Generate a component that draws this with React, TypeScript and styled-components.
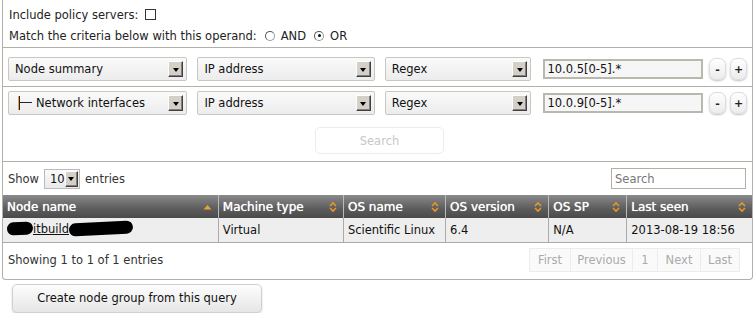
import React from 'react';
import styled, { createGlobalStyle } from 'styled-components';

const GlobalStyle = createGlobalStyle`
  * { box-sizing: border-box; }
  body {
    margin: 0;
    background: #fff;
    font-family: "DejaVu Sans", Verdana, sans-serif;
    font-size: 11.5px;
    color: #222;
  }
`;

const Panel = styled.div`
  width: 751px;
  margin-left: 2px;
  border: 1px solid #b0b0a8;
  border-top: none;
  border-bottom-right-radius: 4px;
  border-bottom-left-radius: 4px;
`;

const Options = styled.div`
  height: 48px;
  padding: 7px 6px 0;
  border-bottom: 1px solid #b0b0a8;
  display: flex;
  flex-direction: column;
  gap: 6px;
`;

const OptionLine = styled.div`
  display: flex;
  align-items: center;
  gap: 6px;
  height: 15px;
`;

const Check = styled.span`
  width: 11px;
  height: 11px;
  border: 1px solid #333;
  background: #fff;
  margin-left: 1px;
`;

const Radio = styled.span<{ checked?: boolean }>`
  width: 10px;
  height: 10px;
  border-radius: 50%;
  border: 1px solid #999;
  border-top-color: #555;
  border-left-color: #555;
  background: #fff;
  display: inline-flex;
  align-items: center;
  justify-content: center;
  margin-left: 2px;
  &::after {
    content: '';
    width: 3px;
    height: 3px;
    border-radius: 50%;
    background: ${p => (p.checked ? '#111' : 'transparent')};
  }
`;

const CriteriaRow = styled.div<{ divider?: boolean; top: number; h: number }>`
  display: flex;
  align-items: flex-start;
  height: ${p => p.h}px;
  padding: ${p => p.top}px 5px 0;
  gap: 8px;
  border-bottom: ${p => (p.divider ? '1px solid #b0b0a8' : 'none')};
`;

const Select = styled.div<{ w: number }>`
  width: ${p => p.w}px;
  height: 24px;
  border: 1px solid #c8c8c0;
  border-radius: 2px;
  background: linear-gradient(#fafafa, #ececec);
  display: flex;
  align-items: center;
  justify-content: space-between;
  padding: 0 3px 0 6px;
  color: #111;
  margin-right: 2px;
`;

const Arrow = styled.span`
  width: 15px;
  height: 16px;
  background: #d4d0c8;
  border: 1px solid;
  border-color: #fff #404040 #404040 #fff;
  box-shadow: inset -1px -1px 0 #808080;
  display: flex;
  align-items: center;
  justify-content: center;
  &::after {
    content: '';
    border-left: 3.5px solid transparent;
    border-right: 3.5px solid transparent;
    border-top: 4px solid #000;
    margin-top: 1px;
  }
`;

const Branch = styled.span`
  display: inline-flex;
  align-items: center;
  vertical-align: middle;
  margin: -2px 4px 0 4px;
  &::before {
    content: '';
    width: 1px;
    height: 14px;
    background: #223;
    box-shadow: -1px 0 0 #e8a040;
  }
  &::after {
    content: '';
    width: 12px;
    height: 1px;
    background: #223;
  }
`;

const ValueInput = styled.div`
  width: 161px;
  height: 20px;
  margin-top: 2px;
  border: 2px solid #b8b8ac;
  background: #f6f6f6;
  padding: 0 2px;
  display: flex;
  align-items: center;
  color: #111;
  margin-left: 2px;
`;

const RoundBtns = styled.div`
  display: flex;
  gap: 4px;
  margin-left: -2px;
  margin-top: 1px;
`;

const RoundBtn = styled.span`
  width: 17px;
  height: 22px;
  border: 1px solid #ddd;
  border-radius: 7px;
  background: linear-gradient(#fff, #ececec);
  box-shadow: 0 1px 2px rgba(0, 0, 0, 0.25);
  display: flex;
  align-items: center;
  justify-content: center;
  font-size: 11px;
  font-weight: bold;
  color: #222;
`;

const SearchArea = styled.div`
  height: 45px;
  display: flex;
  justify-content: center;
  padding-top: 10px;
  border-bottom: 1px solid #b0b0a8;
`;

const GhostButton = styled.span`
  width: 129px;
  height: 27px;
  border: 1px solid #ececec;
  border-radius: 5px;
  display: flex;
  align-items: center;
  justify-content: center;
  color: #c8c8c8;
  margin-left: 4px;
`;

const TableTools = styled.div`
  display: flex;
  align-items: center;
  justify-content: space-between;
  height: 33px;
  padding: 0 6px 0 5px;
`;

const Length = styled.div`
  display: flex;
  align-items: center;
  gap: 5px;
  color: #333;
`;

const SmallSelect = styled.span`
  width: 36px;
  height: 20px;
  border: 1px solid #bbb;
  background: linear-gradient(#fafafa, #eaeaea);
  display: flex;
  align-items: center;
  justify-content: space-between;
  padding: 0 1px 0 5px;
  color: #111;
`;

const FilterBox = styled.div`
  width: 135px;
  height: 21px;
  border: 1px solid #b0b0a8;
  padding: 0 3px;
  display: flex;
  align-items: center;
  color: #777;
`;

const Table = styled.table`
  width: 100%;
  border-collapse: collapse;
  font-size: 11.5px;
`;

const Th = styled.th<{ w: number }>`
  width: ${p => p.w}px;
  height: 23px;
  padding: 0 6px 0 4px;
  text-align: left;
  color: #fff;
  font-weight: normal;
  font-size: 12px;
  text-shadow: 0 0 0.7px #fff;
  background: linear-gradient(#8a8a8a, #5c5c5c 60%, #4a4a4a);
  border-left: 1px solid #bbb;
  &:first-child {
    border-left: none;
  }
`;

const ThInner = styled.div`
  display: flex;
  align-items: center;
  justify-content: space-between;
`;

const Td = styled.td`
  height: 24px;
  padding: 0 4px;
  background: #eeeeee;
  border-left: 1px solid #aaa;
  border-bottom: 1px solid #aaa;
  color: #111;
  &:first-child {
    border-left: none;
  }
`;

const NodeLink = styled.span`
  display: inline-flex;
  align-items: center;
  text-decoration: underline;
  color: #111;
`;

const Blot = styled.span<{ w: number }>`
  display: inline-block;
  width: ${p => p.w}px;
  height: 13px;
  background: #000;
  border-radius: 7px;
  transform: rotate(-3deg);
`;

const Footer = styled.div`
  display: flex;
  align-items: center;
  justify-content: space-between;
  height: 36px;
  padding: 0 12px 2px 5px;
  color: #333;
`;

const Pager = styled.div`
  display: flex;
`;

const PageBtn = styled.span<{ w: number }>`
  width: ${p => p.w}px;
  height: 24px;
  border: 1px solid #ececec;
  margin-left: -1px;
  background: #fafafa;
  display: flex;
  align-items: center;
  justify-content: center;
  color: #aaa;
`;

const CreateButton = styled.div`
  margin: 4px 0 0 12px;
  width: 250px;
  height: 29px;
  border: 1px solid #d0d0d0;
  border-radius: 5px;
  background: linear-gradient(#fdfdfd, #e6e6e6);
  box-shadow: 0 1px 2px rgba(0, 0, 0, 0.2);
  display: flex;
  align-items: center;
  justify-content: center;
  color: #111;
`;

const SortUp = () => (
  <svg width="9" height="6" viewBox="0 0 9 6">
    <path d="M0.5 5.5 L4.5 1 L8.5 5.5 Z" fill="#f0a030" />
  </svg>
);

const SortBoth = () => (
  <svg width="8" height="12" viewBox="0 0 8 12">
    <path d="M1 5 L4 2 L7 5" fill="none" stroke="#e8962a" strokeWidth="1.6" />
    <path d="M1 7 L4 10 L7 7" fill="none" stroke="#e8962a" strokeWidth="1.6" />
  </svg>
);

const columns = [
  { name: 'Node name', w: 215, sorted: true },
  { name: 'Machine type', w: 125 },
  { name: 'OS name', w: 102 },
  { name: 'OS version', w: 103 },
  { name: 'OS SP', w: 78 },
  { name: 'Last seen', w: 125 },
];

const criteria = [
  { object: 'Node summary', attr: 'IP address', value: '10.0.5[0-5].*', branch: false },
  { object: 'Network interfaces', attr: 'IP address', value: '10.0.9[0-5].*', branch: true },
];

export default function App() {
  return (
    <>
      <GlobalStyle />
      <Panel>
        <Options>
          <OptionLine>
            Include policy servers: <Check />
          </OptionLine>
          <OptionLine>
            Match the criteria below with this operand: <Radio /> AND <Radio checked /> OR
          </OptionLine>
        </Options>

        {criteria.map((c, i) => (
          <CriteriaRow key={c.value} divider={i === 0} top={i === 0 ? 9 : 4} h={i === 0 ? 39 : 30}>
            <Select w={181}>
              <span>
                {c.branch && <Branch />}
                {c.object}
              </span>
              <Arrow />
            </Select>
            <Select w={179}>
              <span>{c.attr}</span>
              <Arrow />
            </Select>
            <Select w={148}>
              <span>Regex</span>
              <Arrow />
            </Select>
            <ValueInput>{c.value}</ValueInput>
            <RoundBtns>
              <RoundBtn>-</RoundBtn>
              <RoundBtn>+</RoundBtn>
            </RoundBtns>
          </CriteriaRow>
        ))}

        <SearchArea>
          <GhostButton>Search</GhostButton>
        </SearchArea>

        <TableTools>
          <Length>
            Show
            <SmallSelect>
              10
              <Arrow />
            </SmallSelect>
            entries
          </Length>
          <FilterBox>Search</FilterBox>
        </TableTools>

        <Table>
          <thead>
            <tr>
              {columns.map(col => (
                <Th key={col.name} w={col.w}>
                  <ThInner>
                    {col.name}
                    {col.sorted ? <SortUp /> : <SortBoth />}
                  </ThInner>
                </Th>
              ))}
            </tr>
          </thead>
          <tbody>
            <tr>
              <Td>
                <NodeLink>
                  <Blot w={26} />
                  itbuild
                  <Blot w={64} />
                </NodeLink>
              </Td>
              <Td>Virtual</Td>
              <Td>Scientific Linux</Td>
              <Td>6.4</Td>
              <Td>N/A</Td>
              <Td>2013-08-19 18:56</Td>
            </tr>
          </tbody>
        </Table>

        <Footer>
          Showing 1 to 1 of 1 entries
          <Pager>
            <PageBtn w={42}>First</PageBtn>
            <PageBtn w={63}>Previous</PageBtn>
            <PageBtn w={26}>1</PageBtn>
            <PageBtn w={44}>Next</PageBtn>
            <PageBtn w={40}>Last</PageBtn>
          </Pager>
        </Footer>
      </Panel>
      <CreateButton>Create node group from this query</CreateButton>
    </>
  );
}
